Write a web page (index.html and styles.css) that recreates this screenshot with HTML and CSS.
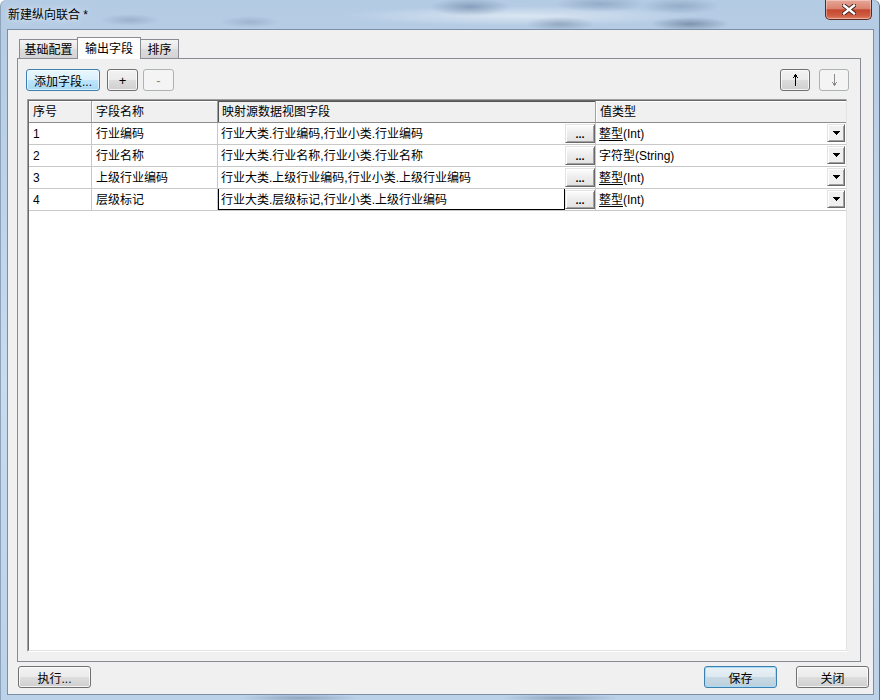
FILE: index.html
```html
<!DOCTYPE html>
<html lang="zh-CN">

<head>
    <meta charset="UTF-8">
    <title>新建纵向联合</title>
    <link rel="stylesheet" href="styles.css">
</head>

<body>
    <div class="window">
        <div class="titlebar">
            <span class="title">新建纵向联合 *</span>
            <button class="close-btn" title="关闭">
                <svg width="14" height="11" viewBox="0 0 14 11">
                    <path d="M2 1.5 L12 9.5 M12 1.5 L2 9.5" stroke="#3b1a14" stroke-width="4.2" stroke-linecap="square"/>
                    <path d="M2 1.5 L12 9.5 M12 1.5 L2 9.5" stroke="#fff" stroke-width="2.4" stroke-linecap="square"/>
                </svg>
            </button>
        </div>

        <div class="client">
            <div class="tabs">
                <div class="tab tab-first">基础配置</div>
                <div class="tab active">输出字段</div>
                <div class="tab tab-last">排序</div>
            </div>

            <div class="panel">
                <div class="toolbar">
                    <button class="btn btn-hot btn-add">添加字段...</button>
                    <button class="btn btn-sq">+</button>
                    <button class="btn btn-sq disabled">-</button>
                    <span class="spacer"></span>
                    <button class="btn btn-arrow">
                        <svg width="7" height="12" viewBox="0 0 7 12" shape-rendering="crispEdges">
                            <path d="M3 0h1v12H3z M2 1h3v2H2z M1 3h1v1H1z M5 3h1v1H5z" fill="#000"/>
                        </svg>
                    </button>
                    <button class="btn btn-arrow disabled">
                        <svg width="7" height="12" viewBox="0 0 7 12" shape-rendering="crispEdges">
                            <path d="M3 0h1v12H3z M2 9h3v2H2z M1 8h1v1H1z M5 8h1v1H5z" fill="#8c8c8c"/>
                        </svg>
                    </button>
                </div>

                <div class="grid">
                    <div class="grid-inner">
                        <div class="grid-head">
                            <div class="hcell">序号</div>
                            <div class="hcell">字段名称</div>
                            <div class="hcell hcell-sel">映射源数据视图字段</div>
                            <div class="hcell hcell-last">值类型</div>
                        </div>

                        <div class="grid-row">
                            <div class="cell">1</div>
                            <div class="cell">行业编码</div>
                            <div class="cell map-cell">
                                <span class="map-text">行业大类.行业编码,行业小类.行业编码</span>
                                <button class="ellipsis">...</button>
                            </div>
                            <div class="cell type-cell">
                                <span class="type-text"><u>整型</u>(Int)</span>
                                <span class="drop"><svg width="7" height="4" viewBox="0 0 7 4" shape-rendering="crispEdges"><path d="M0 0h7v1H0z M1 1h5v1H1z M2 2h3v1H2z M3 3h1v1H3z" fill="#000"/></svg></span>
                            </div>
                        </div>

                        <div class="grid-row">
                            <div class="cell">2</div>
                            <div class="cell">行业名称</div>
                            <div class="cell map-cell">
                                <span class="map-text">行业大类.行业名称,行业小类.行业名称</span>
                                <button class="ellipsis">...</button>
                            </div>
                            <div class="cell type-cell">
                                <span class="type-text">字符型(String)</span>
                                <span class="drop"><svg width="7" height="4" viewBox="0 0 7 4" shape-rendering="crispEdges"><path d="M0 0h7v1H0z M1 1h5v1H1z M2 2h3v1H2z M3 3h1v1H3z" fill="#000"/></svg></span>
                            </div>
                        </div>

                        <div class="grid-row">
                            <div class="cell">3</div>
                            <div class="cell">上级行业编码</div>
                            <div class="cell map-cell">
                                <span class="map-text">行业大类.上级行业编码,行业小类.上级行业编码</span>
                                <button class="ellipsis">...</button>
                            </div>
                            <div class="cell type-cell">
                                <span class="type-text"><u>整型</u>(Int)</span>
                                <span class="drop"><svg width="7" height="4" viewBox="0 0 7 4" shape-rendering="crispEdges"><path d="M0 0h7v1H0z M1 1h5v1H1z M2 2h3v1H2z M3 3h1v1H3z" fill="#000"/></svg></span>
                            </div>
                        </div>

                        <div class="grid-row">
                            <div class="cell">4</div>
                            <div class="cell">层级标记</div>
                            <div class="cell map-cell">
                                <span class="map-text editing">行业大类.层级标记,行业小类.上级行业编码</span>
                                <button class="ellipsis">...</button>
                            </div>
                            <div class="cell type-cell">
                                <span class="type-text"><u>整型</u>(Int)</span>
                                <span class="drop"><svg width="7" height="4" viewBox="0 0 7 4" shape-rendering="crispEdges"><path d="M0 0h7v1H0z M1 1h5v1H1z M2 2h3v1H2z M3 3h1v1H3z" fill="#000"/></svg></span>
                            </div>
                        </div>
                    </div>
                </div>
            </div>

            <div class="footer">
                <button class="btn btn-wide">执行...</button>
                <button class="btn btn-wide btn-default">保存</button>
                <button class="btn btn-wide">关闭</button>
            </div>
        </div>
    </div>
</body>

</html>
```

FILE: styles.css
```css
body {
    margin: 0;
    font-family: "Liberation Sans", "Noto Sans CJK SC", sans-serif;
    font-size: 12px;
    color: #000;
}

button {
    font-family: inherit;
    font-size: 12px;
    color: #000;
    padding: 0;
    margin: 0;
}

/* window frame (aero glass look) */
.window {
    width: 880px;
    height: 700px;
    box-sizing: border-box;
    display: flex;
    flex-direction: column;
    padding: 0 6px 5px 7px;
    border-radius: 6px 6px 0 0;
    box-shadow: inset -1px 0 0 #5d7188, inset 1px 0 0 #8da3ba;
    background:
        radial-gradient(ellipse 40px 9px at 470px 7px, rgba(80, 105, 140, 0.45), transparent),
        radial-gradient(ellipse 45px 8px at 600px 4px, rgba(90, 115, 150, 0.35), transparent),
        radial-gradient(ellipse 40px 8px at 680px 6px, rgba(90, 115, 150, 0.35), transparent),
        radial-gradient(ellipse 40px 7px at 690px 24px, rgba(60, 80, 110, 0.45), transparent),
        radial-gradient(ellipse 35px 7px at 560px 24px, rgba(60, 80, 110, 0.3), transparent),
        radial-gradient(ellipse 30px 6px at 130px 20px, rgba(80, 100, 130, 0.25), transparent),
        radial-gradient(ellipse 30px 6px at 250px 22px, rgba(80, 100, 130, 0.22), transparent),
        radial-gradient(ellipse 180px 10px at 520px 16px, rgba(255, 255, 255, 0.5), transparent),
        radial-gradient(ellipse 60px 4px at 300px 698px, rgba(60, 80, 110, 0.35), transparent),
        radial-gradient(ellipse 60px 4px at 560px 698px, rgba(60, 80, 110, 0.35), transparent),
        linear-gradient(to bottom, #b4cbe4, #c8dbef 55%, #bcd2e9);
}

.titlebar {
    height: 29px;
    display: flex;
    align-items: flex-start;
}

.title {
    margin: 7px 0 0 1px;
    line-height: 16px;
    text-shadow: 0 0 6px rgba(255, 255, 255, 0.9);
}

.close-btn {
    margin-left: auto;
    margin-right: 2px;
    width: 47px;
    height: 20px;
    display: flex;
    align-items: center;
    justify-content: center;
    border: 1px solid #5a2a22;
    border-top: none;
    border-radius: 0 0 5px 5px;
    background: linear-gradient(to bottom, #e8a697 0%, #d98470 45%, #c6472f 52%, #cf5f44 85%, #e08a6e 100%);
    box-shadow: inset 0 0 0 1px rgba(255, 255, 255, 0.35);
}

/* client area */
.client {
    flex: 1;
    display: flex;
    flex-direction: column;
    background: #f0f0f0;
    border: 1px solid #7b8ea5;
}

.tabs {
    display: flex;
    align-items: flex-end;
    height: 21px;
    margin: 7px 0 0 11px;
}

.tab {
    box-sizing: border-box;
    height: 19px;
    padding-top: 2px;
    line-height: 17px;
    text-align: center;
    border: 1px solid #898c95;
    border-bottom: none;
    background: linear-gradient(to bottom, #f4f4f4, #e6e6e6 50%, #dcdcdc 51%, #d4d4d4);
}

.tab-first {
    width: 59px;
}

.tab-last {
    width: 39px;
    margin-left: -1px;
}

.tab.active {
    position: relative;
    z-index: 1;
    width: 64px;
    height: 22px;
    line-height: 19px;
    margin: 0 0 -1px -1px;
    background: #fff;
}

.panel {
    flex: 1;
    display: flex;
    flex-direction: column;
    margin: 0 12px 0 9px;
    padding: 10px 11px 9px 8px;
    border: 1px solid #898c95;
    background: #f0f0f0;
}

/* buttons */
.btn {
    box-sizing: border-box;
    height: 22px;
    padding-top: 1px;
    border: 1px solid #707070;
    border-radius: 3px;
    background: linear-gradient(to bottom, #f2f2f2 0%, #ebebeb 50%, #dddddd 51%, #cfcfcf 100%);
    box-shadow: inset 0 0 0 1px rgba(255, 255, 255, 0.75);
    display: flex;
    align-items: center;
    justify-content: center;
}

.btn-hot {
    border-color: #3c7fb1;
    background: linear-gradient(to bottom, #eaf6fd 0%, #d9f0fc 50%, #bee6fd 51%, #a7d9f5 100%);
    box-shadow: inset 0 0 0 1px rgba(255, 255, 255, 0.6);
}

.btn-default {
    border-color: #3c7fb1;
    background: linear-gradient(to bottom, #e9f1f6 0%, #dde9f0 50%, #c8d9e4 51%, #bcd0dd 100%);
    box-shadow: inset 0 0 0 1px #a6dcf6;
}

.btn.disabled {
    border-color: #adb2b5;
    background: #f4f4f4;
    box-shadow: none;
    color: #838383;
}

.toolbar {
    display: flex;
    height: 22px;
    margin-bottom: 8px;
}

.btn-add {
    width: 74px;
    margin-right: 7px;
}

.btn-sq {
    width: 31px;
    margin-right: 5px;
    font-size: 13px;
}

.btn-sq.disabled {
    margin-right: 0;
}

.spacer {
    flex: 1;
}

.btn-arrow {
    width: 30px;
    padding-top: 0;
}

.btn-arrow + .btn-arrow {
    margin-left: 9px;
}

/* data grid */
.grid {
    flex: 1;
    display: flex;
    margin: 0 2px 0 1px;
    border: 1px solid;
    border-color: #a0a0a0 #fff #fff #a0a0a0;
}

.grid-inner {
    flex: 1;
    border: 1px solid;
    border-color: #696969 #e3e3e3 #e3e3e3 #696969;
    background: #fff;
}

.grid-head,
.grid-row {
    display: grid;
    grid-template-columns: 63px 126px 378px 250px;
    height: 22px;
}

.hcell,
.cell {
    box-sizing: border-box;
    white-space: nowrap;
    overflow: hidden;
}

.hcell {
    padding: 2px 0 0 4px;
    line-height: 19px;
    background: #f0f0f0;
    border-right: 1px solid #a0a0a0;
    border-bottom: 1px solid #8c8c8c;
    box-shadow: inset 1px 1px 0 #fff;
}

.hcell-sel {
    box-shadow: inset 1px 0 0 #555, inset 0 1px 0 #555;
}

.hcell-last {
    border-right: none;
}

.cell {
    padding: 2px 0 0 4px;
    line-height: 19px;
    border-right: 1px solid #c8c8c8;
    border-bottom: 1px solid #c8c8c8;
}

.map-cell {
    display: flex;
    padding: 0;
}

.map-text {
    flex: 1;
    padding: 2px 0 0 3px;
}

.map-text.editing {
    box-sizing: border-box;
    height: 22px;
    margin-top: -1px;
    line-height: 19px;
    padding: 2px 0 0 2px;
    border: 1px solid #000;
}

.ellipsis {
    box-sizing: border-box;
    width: 30px;
    height: 19px;
    margin-top: 1px;
    font-size: 11px;
    font-weight: bold;
    line-height: 14px;
    border: 1px solid;
    border-color: #e3e3e3 #696969 #696969 #e3e3e3;
    background: linear-gradient(to bottom, #fdfdfd, #ececec 50%, #e2e2e2);
    box-shadow: inset 1px 1px 0 #fff, inset -1px -1px 0 #a0a0a0;
}

.type-cell {
    display: flex;
    border-right: none;
    padding: 0 0 0 3px;
}

.type-text {
    flex: 1;
    padding-top: 2px;
}

.type-text u {
    text-underline-offset: 2px;
}

.drop {
    box-sizing: border-box;
    width: 18px;
    height: 18px;
    margin: 1px 1px 0 0;
    display: flex;
    align-items: center;
    justify-content: center;
    background: #f0f0f0;
    border: 1px solid;
    border-color: #e3e3e3 #696969 #696969 #e3e3e3;
    box-shadow: inset 1px 1px 0 #fff, inset -1px -1px 0 #a0a0a0;
}

/* bottom bar */
.footer {
    display: flex;
    height: 22px;
    padding: 4px 4px 6px 10px;
}

.btn-wide {
    width: 73px;
}

.btn-default {
    margin-left: auto;
    margin-right: 19px;
}
```
